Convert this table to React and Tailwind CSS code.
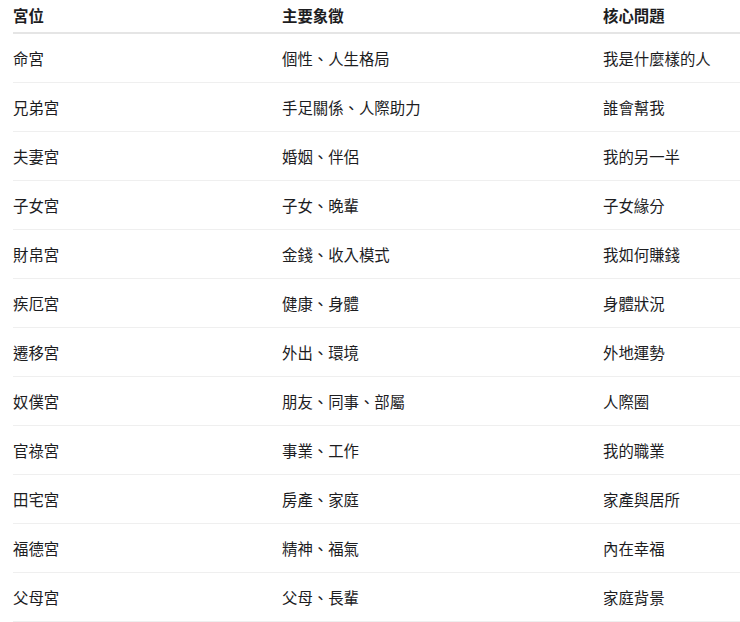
import React from 'react';

const rows = [
  ['命宮', '個性、人生格局', '我是什麼樣的人'],
  ['兄弟宮', '手足關係、人際助力', '誰會幫我'],
  ['夫妻宮', '婚姻、伴侶', '我的另一半'],
  ['子女宮', '子女、晚輩', '子女緣分'],
  ['財帛宮', '金錢、收入模式', '我如何賺錢'],
  ['疾厄宮', '健康、身體', '身體狀況'],
  ['遷移宮', '外出、環境', '外地運勢'],
  ['奴僕宮', '朋友、同事、部屬', '人際圈'],
  ['官祿宮', '事業、工作', '我的職業'],
  ['田宅宮', '房產、家庭', '家產與居所'],
  ['福德宮', '精神、福氣', '內在幸福'],
  ['父母宮', '父母、長輩', '家庭背景'],
];

export default function App() {
  return (
    <div
      className="w-[740px] h-[622px] overflow-hidden bg-white pl-[13px] text-[#1d1d1f]"
      style={{ fontFamily: '"Noto Sans CJK TC", "Noto Sans", sans-serif' }}
    >
      <table className="w-[727px] border-collapse text-[15.4px] leading-[21px]">
        <thead>
          <tr className="border-b-2 border-[#e5e5e5]">
            <th className="w-[269px] pt-[5px] pb-[6px] text-left font-bold">宮位</th>
            <th className="w-[321px] pt-[5px] pb-[6px] text-left font-bold">主要象徵</th>
            <th className="pt-[5px] pb-[6px] text-left font-bold">核心問題</th>
          </tr>
        </thead>
        <tbody>
          {rows.map((r, i) => (
            <tr key={i} className="border-b border-[#efefef]">
              <td className="py-[14px] leading-[20px]">{r[0]}</td>
              <td className="py-[14px] leading-[20px]">{r[1]}</td>
              <td className="py-[14px] leading-[20px]">{r[2]}</td>
            </tr>
          ))}
        </tbody>
      </table>
    </div>
  );
}
